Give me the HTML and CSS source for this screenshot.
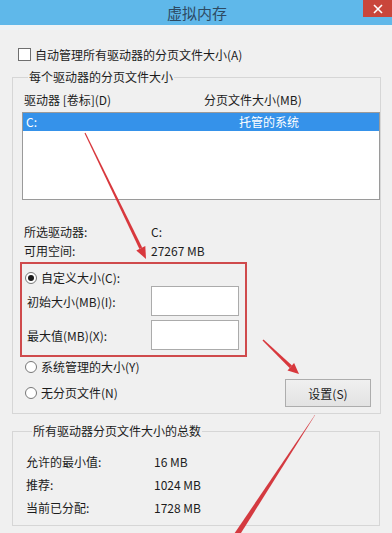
FILE: index.html
```html
<!DOCTYPE html>
<html lang="zh-CN">
<head>
<meta charset="utf-8">
<title>虚拟内存</title>
<link rel="stylesheet" href="styles.css">
</head>
<body>
<div class="window">
  <header class="titlebar">
    <span class="spacer"></span>
    <h1 class="title">虚拟内存</h1>
    <div class="close-wrap">
      <span class="close">
        <svg width="10" height="10" viewBox="0 0 10 10"><path d="M1 1 L9 9 M9 1 L1 9" stroke="#fff" stroke-width="1.6" fill="none"/></svg>
      </span>
    </div>
  </header>
  <div class="strip"></div>
  <main class="body">
    <div class="check-row"><span class="checkbox"></span><span>自动管理所有驱动器的分页文件大小(A)</span></div>

    <fieldset class="group group-drives">
      <legend>每个驱动器的分页文件大小</legend>
      <div class="cols"><span>驱动器 [卷标](D)</span><span>分页文件大小(MB)</span></div>
      <div class="listbox">
        <div class="list-row selected"><span>C:</span><span>托管的系统</span></div>
      </div>
      <div class="info">
        <span>所选驱动器:</span><span>C:</span>
        <span>可用空间:</span><span>27267 MB</span>
      </div>
      <div class="custom-box">
        <div class="radio-row"><span class="radio checked"></span><span>自定义大小(C):</span></div>
        <div class="field-row"><span>初始大小(MB)(I):</span><span class="input"></span></div>
        <div class="field-row"><span>最大值(MB)(X):</span><span class="input"></span></div>
      </div>
      <div class="options">
        <div class="radio-list">
          <div class="radio-row"><span class="radio"></span><span>系统管理的大小(Y)</span></div>
          <div class="radio-row"><span class="radio"></span><span>无分页文件(N)</span></div>
        </div>
        <span class="btn">设置(S)</span>
      </div>
    </fieldset>

    <fieldset class="group group-total">
      <legend>所有驱动器分页文件大小的总数</legend>
      <div class="totals">
        <span>允许的最小值:</span><span>16 MB</span>
        <span>推荐:</span><span>1024 MB</span>
        <span>当前已分配:</span><span>1728 MB</span>
      </div>
    </fieldset>
  </main>

  <svg class="arrows" width="392" height="533" viewBox="0 0 392 533">
    <polygon fill="#d8383d" points="85.5,132.8 84.5,133.2 139.4,248.9 142.2,247.5"/>
    <polygon fill="#d8383d" points="146,259 145.3,246 136.3,250.4"/>
    <polygon fill="#d8383d" points="263.5,339.4 262.5,340.6 289.6,368 292,365.4"/>
    <polygon fill="#d8383d" points="299,374 294.1,363 287.5,370.4"/>
    <polygon fill="#d43a40" points="315.3,414.8 314.7,415.2 232,537 236.6,540"/>
  </svg>
</div>
</body>
</html>
```

FILE: styles.css
```css
* { box-sizing: border-box; }

html, body {
  margin: 0;
  padding: 0;
}

body {
  width: 392px;
  height: 533px;
  overflow: hidden;
  background: #f0f0f0;
  font-family: "Noto Sans CJK SC", "Noto Sans", sans-serif;
  font-size: 12px;
  color: #1c1c1c;
}

.window {
  position: relative;
  width: 392px;
  height: 533px;
}

.titlebar {
  height: 25px;
  background: #5fb8ea;
  display: grid;
  grid-template-columns: 1fr auto 1fr;
  align-items: center;
}

.title {
  margin: 0;
  font-size: 15px;
  font-weight: normal;
  color: #2d4a62;
  line-height: 25px;
  padding-left: 2px;
}

.close-wrap {
  justify-self: end;
  align-self: start;
}

.close {
  display: flex;
  align-items: center;
  justify-content: center;
  width: 29px;
  height: 17px;
  background: #c9463b;
}

.strip {
  height: 5px;
  background: #eef3f6;
}

.body {
  padding: 0 11px 0 12px;
}

.check-row {
  display: flex;
  align-items: center;
  gap: 4px;
  height: 13px;
  margin: 18px 0 0 6px;
  line-height: 13px;
}

.checkbox {
  width: 13px;
  height: 13px;
  border: 1px solid #6f6f6f;
  background: #fff;
}

.group {
  margin: 0;
  border: 1px solid #d6d6d6;
  padding: 0;
  min-width: 0;
}

.group legend {
  margin-left: 6px;
  padding: 0 1px;
  line-height: 16px;
}

.group-drives {
  margin-top: 8px;
  width: 369px;
  padding: 0 0 6px 9px;
}

.cols {
  display: grid;
  grid-template-columns: 180px auto;
  line-height: 16px;
  margin-top: 7px;
  padding-left: 2px;
}

.listbox {
  margin-top: 4px;
  height: 88px;
  border: 1px solid #9a9a9a;
  background: #fff;
}

.list-row {
  display: grid;
  grid-template-columns: 213px auto;
  height: 18px;
  line-height: 18px;
  padding-left: 3px;
}

.list-row.selected {
  background: #3592ea;
  color: #fff;
}

.info {
  display: grid;
  grid-template-columns: 127px auto;
  line-height: 19px;
  margin-top: 22px;
  padding-left: 2px;
}

.custom-box {
  margin: 2px 0 0 -2px;
  width: 227px;
  height: 95px;
  border: 2px solid #cf4a4c;
  padding: 6px 0 0 3px;
}

.radio-row {
  display: flex;
  align-items: center;
  gap: 4px;
  height: 16px;
  line-height: 16px;
}

.radio {
  width: 12px;
  height: 12px;
  border: 1px solid #777;
  border-radius: 50%;
  background: #fff;
  display: flex;
  align-items: center;
  justify-content: center;
}

.radio.checked::after {
  content: "";
  width: 6px;
  height: 6px;
  border-radius: 50%;
  background: #1a1a1a;
}

.field-row {
  display: grid;
  grid-template-columns: 124px 88px;
  align-items: center;
  padding-left: 2px;
  margin-bottom: 4px;
}

.input {
  height: 30px;
  border: 1px solid #ababab;
  background: #fff;
}

.options {
  display: flex;
  justify-content: space-between;
  align-items: flex-end;
}

.radio-list {
  display: flex;
  flex-direction: column;
  gap: 6px;
  padding: 0 0 4px 3px;
}

.radio-list .radio-row {
  height: 20px;
}

.btn {
  display: flex;
  align-items: center;
  justify-content: center;
  width: 86px;
  height: 28px;
  margin-right: 9px;
  border: 1px solid #adadad;
  background: linear-gradient(#f0f0f0, #e3e3e3);
}

.group-total {
  margin-top: 9px;
  width: 368px;
  padding: 0 0 6px 13px;
}

.totals {
  display: grid;
  grid-template-columns: 128px auto;
  line-height: 23px;
  margin-top: 11px;
}

.arrows {
  position: absolute;
  left: 0;
  top: 0;
  pointer-events: none;
}
```
